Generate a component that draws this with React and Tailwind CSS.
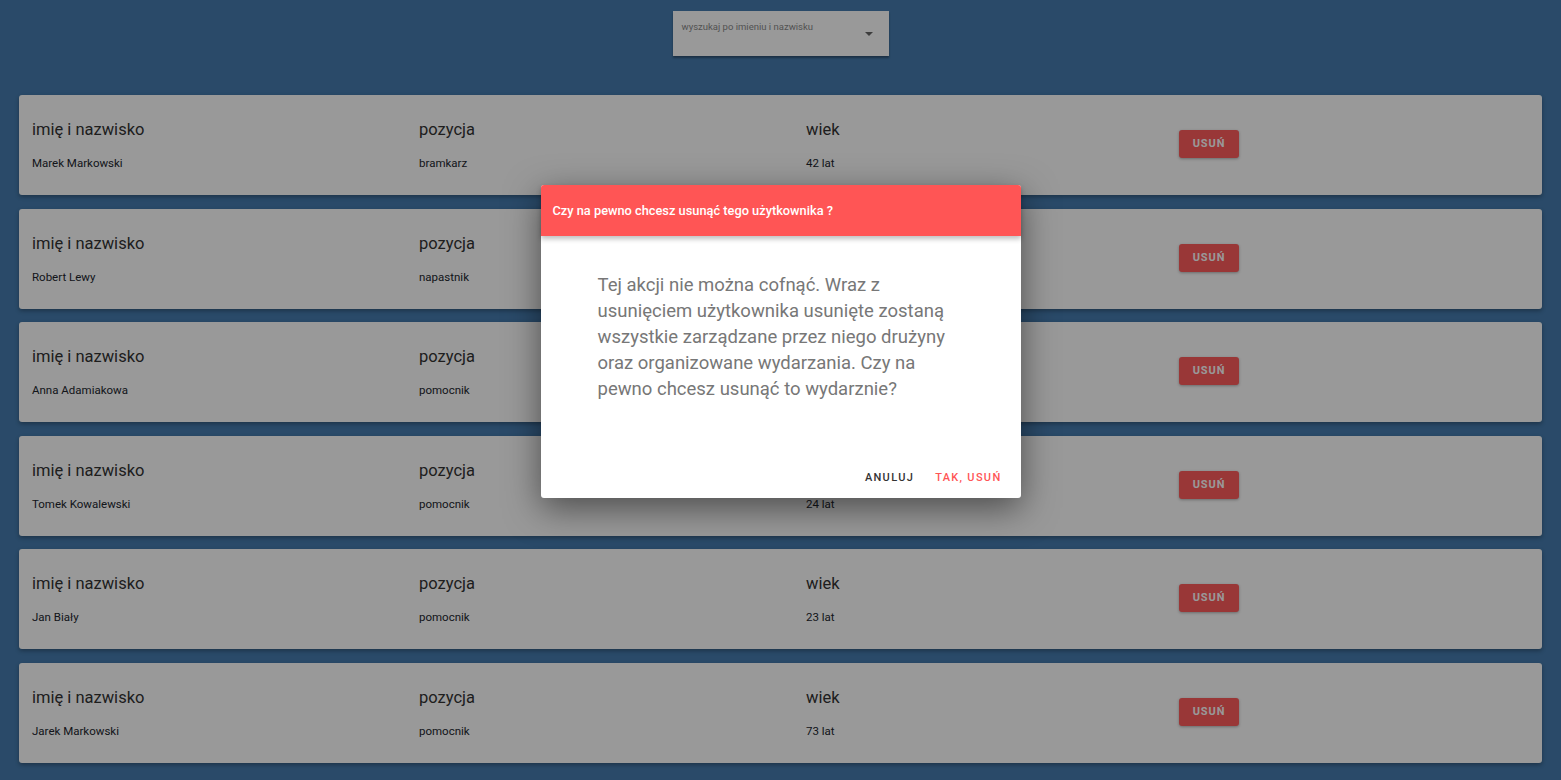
import React from 'react';

const players = [
  { name: 'Marek Markowski', position: 'bramkarz', age: 42 },
  { name: 'Robert Lewy', position: 'napastnik', age: 31 },
  { name: 'Anna Adamiakowa', position: 'pomocnik', age: 28 },
  { name: 'Tomek Kowalewski', position: 'pomocnik', age: 24 },
  { name: 'Jan Biały', position: 'pomocnik', age: 23 },
  { name: 'Jarek Markowski', position: 'pomocnik', age: 73 },
];

const PlayerCard = ({ player }) => (
  <div className="h-[100px] bg-white rounded-[3px] shadow-[0_2px_4px_rgba(0,0,0,0.3)] pl-[13px] grid grid-cols-[387px_387px_373px_1fr]">
    <div className="pt-[25px]">
      <div className="text-[16.5px] leading-[20px] text-[#333]">imię i nazwisko</div>
      <div className="mt-[16px] text-[11.5px] leading-[14px] text-[#22262e]">{player.name}</div>
    </div>
    <div className="pt-[25px]">
      <div className="text-[16.5px] leading-[20px] text-[#333]">pozycja</div>
      <div className="mt-[16px] text-[11.5px] leading-[14px] text-[#22262e]">{player.position}</div>
    </div>
    <div className="pt-[25px]">
      <div className="text-[16.5px] leading-[20px] text-[#333]">wiek</div>
      <div className="mt-[16px] text-[11.5px] leading-[14px] text-[#22262e]">{player.age} lat</div>
    </div>
    <div className="pt-[35px]">
      <button className="w-[60px] h-[28px] rounded-[3px] bg-[#ff5c5c] text-white text-[11px] font-bold tracking-[0.08em] shadow-[0_1px_3px_rgba(0,0,0,0.3)]">
        USUŃ
      </button>
    </div>
  </div>
);

export default function App() {
  return (
    <div className="relative min-h-[780px] bg-[#467caf] font-['Roboto',sans-serif]">
      <div className="flex justify-center pt-[11px]">
        <div className="relative w-[216px] h-[45px] bg-white shadow-[0_2px_2px_rgba(0,0,0,0.35)]">
          <div className="pl-[9px] pt-[10px] text-[9.5px] leading-[12px] text-[#8a8a8a]">wyszukaj po imieniu i nazwisku</div>
          <svg className="absolute right-[16px] top-[21px]" width="8" height="4" viewBox="0 0 8 4">
            <path d="M0 0h8L4 4z" fill="#666" />
          </svg>
        </div>
      </div>

      <div className="mt-[39px] px-[19px] flex flex-col gap-[13.5px] pb-[18px]">
        {players.map((p) => (
          <PlayerCard key={p.name} player={p} />
        ))}
      </div>

      <div className="absolute inset-0 bg-black/40 flex justify-center">
        <div className="mt-[185px] w-[480px] h-[313px] bg-white rounded-[3px] shadow-[0_10px_35px_rgba(0,0,0,0.5)] flex flex-col">
          <div className="h-[51px] bg-[#ff5555] rounded-t-[3px] shadow-[0_3px_5px_rgba(0,0,0,0.25)] flex items-center pl-[12px] relative z-10">
            <span className="text-white text-[12.8px] font-medium">Czy na pewno chcesz usunąć tego użytkownika ?</span>
          </div>
          <div className="pl-[57px] pr-[53px] pt-[36px] text-[18.5px] leading-[26px] text-[#777]">
            Tej akcji nie można cofnąć. Wraz z usunięciem użytkownika usunięte zostaną wszystkie zarządzane przez niego drużyny oraz organizowane wydarzania. Czy na pewno chcesz usunąć to wydarznie?
          </div>
          <div className="mt-auto flex justify-end gap-[21px] pr-[19px] pb-[12px]">
            <span className="text-[11px] font-medium tracking-[0.12em] text-[#333]">ANULUJ</span>
            <span className="text-[11px] font-medium tracking-[0.12em] text-[#ff5555]">TAK, USUŃ</span>
          </div>
        </div>
      </div>
    </div>
  );
}
